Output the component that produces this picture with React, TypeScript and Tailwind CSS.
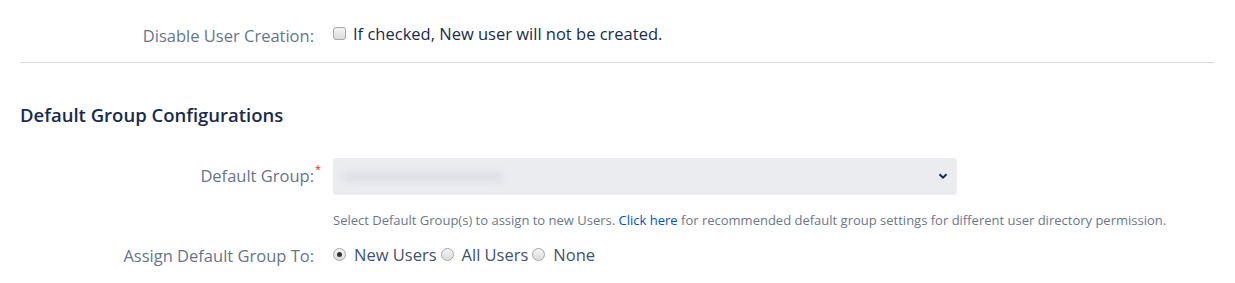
import React from "react";

const font = { fontFamily: '"Open Sans", "Noto Sans", Arial, sans-serif' };

function Radio({ checked }: { checked?: boolean }) {
  return (
    <span className="inline-flex h-[13px] w-[13px] shrink-0 items-center justify-center rounded-full border border-[#a6a6a6] bg-gradient-to-b from-[#f4f4f4] to-[#dcdcdc]">
      {checked && <span className="h-[5px] w-[5px] rounded-full bg-[#333]" />}
    </span>
  );
}

export default function App() {
  return (
    <div className="w-[1235px] h-[283px] bg-white px-[20px]" style={font}>
      <div className="grid grid-cols-[294px_1fr] gap-x-[19px] pt-[20px]">
        <div className="pt-[5px] text-right text-[16.5px] leading-[22px] text-[#67758a]">Disable User Creation:</div>
        <div className="flex items-center gap-[7px] text-[16.5px] leading-[24px] text-[#172b4d]">
          <span className="h-[13px] w-[13px] rounded-[3px] border border-[#a6a6a6] bg-gradient-to-b from-[#f4f4f4] to-[#dcdcdc]" />
          <span>If checked, New user will not be created.</span>
        </div>
      </div>
      <div className="mt-[15px] h-px w-[1194px] bg-[#d9d9d9]" />
      <h2 className="mt-[40px] text-[18.5px] font-semibold leading-[24px] text-[#172b4d]">Default Group Configurations</h2>
      <div className="mt-[31px] grid grid-cols-[294px_1fr] gap-x-[19px]">
        <div className="flex h-[37px] items-center justify-end text-[16.5px] text-[#67758a]">
          <span className="relative">
            Default Group:
            <span className="absolute -right-[7px] -top-[3px] text-[11px] text-[#de350b]">*</span>
          </span>
        </div>
        <div>
          <div className="relative flex h-[37px] w-[624px] items-center rounded-[4px] bg-[#ebecf0] px-[10px]">
            <span className="h-[12px] w-[160px] rounded-full bg-[#dfe1e6] blur-[3px]" />
            <svg className="absolute right-[9px] top-[13px]" width="10" height="10" viewBox="0 0 10 10">
              <path d="M1.5 3.2 L5 6.7 L8.5 3.2" fill="none" stroke="#172b4d" strokeWidth="2" />
            </svg>
          </div>
          <div className="mt-[17px] text-[13px] leading-[16px] text-[#6b778c]">
            Select Default Group(s) to assign to new Users. <span className="text-[#0052cc]">Click here</span> for recommended default group settings for different user directory permission.
          </div>
        </div>
      </div>
      <div className="mt-[14px] grid grid-cols-[294px_1fr] gap-x-[19px]">
        <div className="pt-[3px] text-right text-[16.5px] leading-[22px] text-[#67758a]">Assign Default Group To:</div>
        <div className="flex items-center gap-[4px] text-[16.5px] leading-[24px] text-[#42526e]">
          <Radio checked />
          <span className="ml-[4px]">New Users</span>
          <Radio />
          <span className="ml-[4px]">All Users</span>
          <Radio />
          <span className="ml-[4px]">None</span>
        </div>
      </div>
    </div>
  );
}
